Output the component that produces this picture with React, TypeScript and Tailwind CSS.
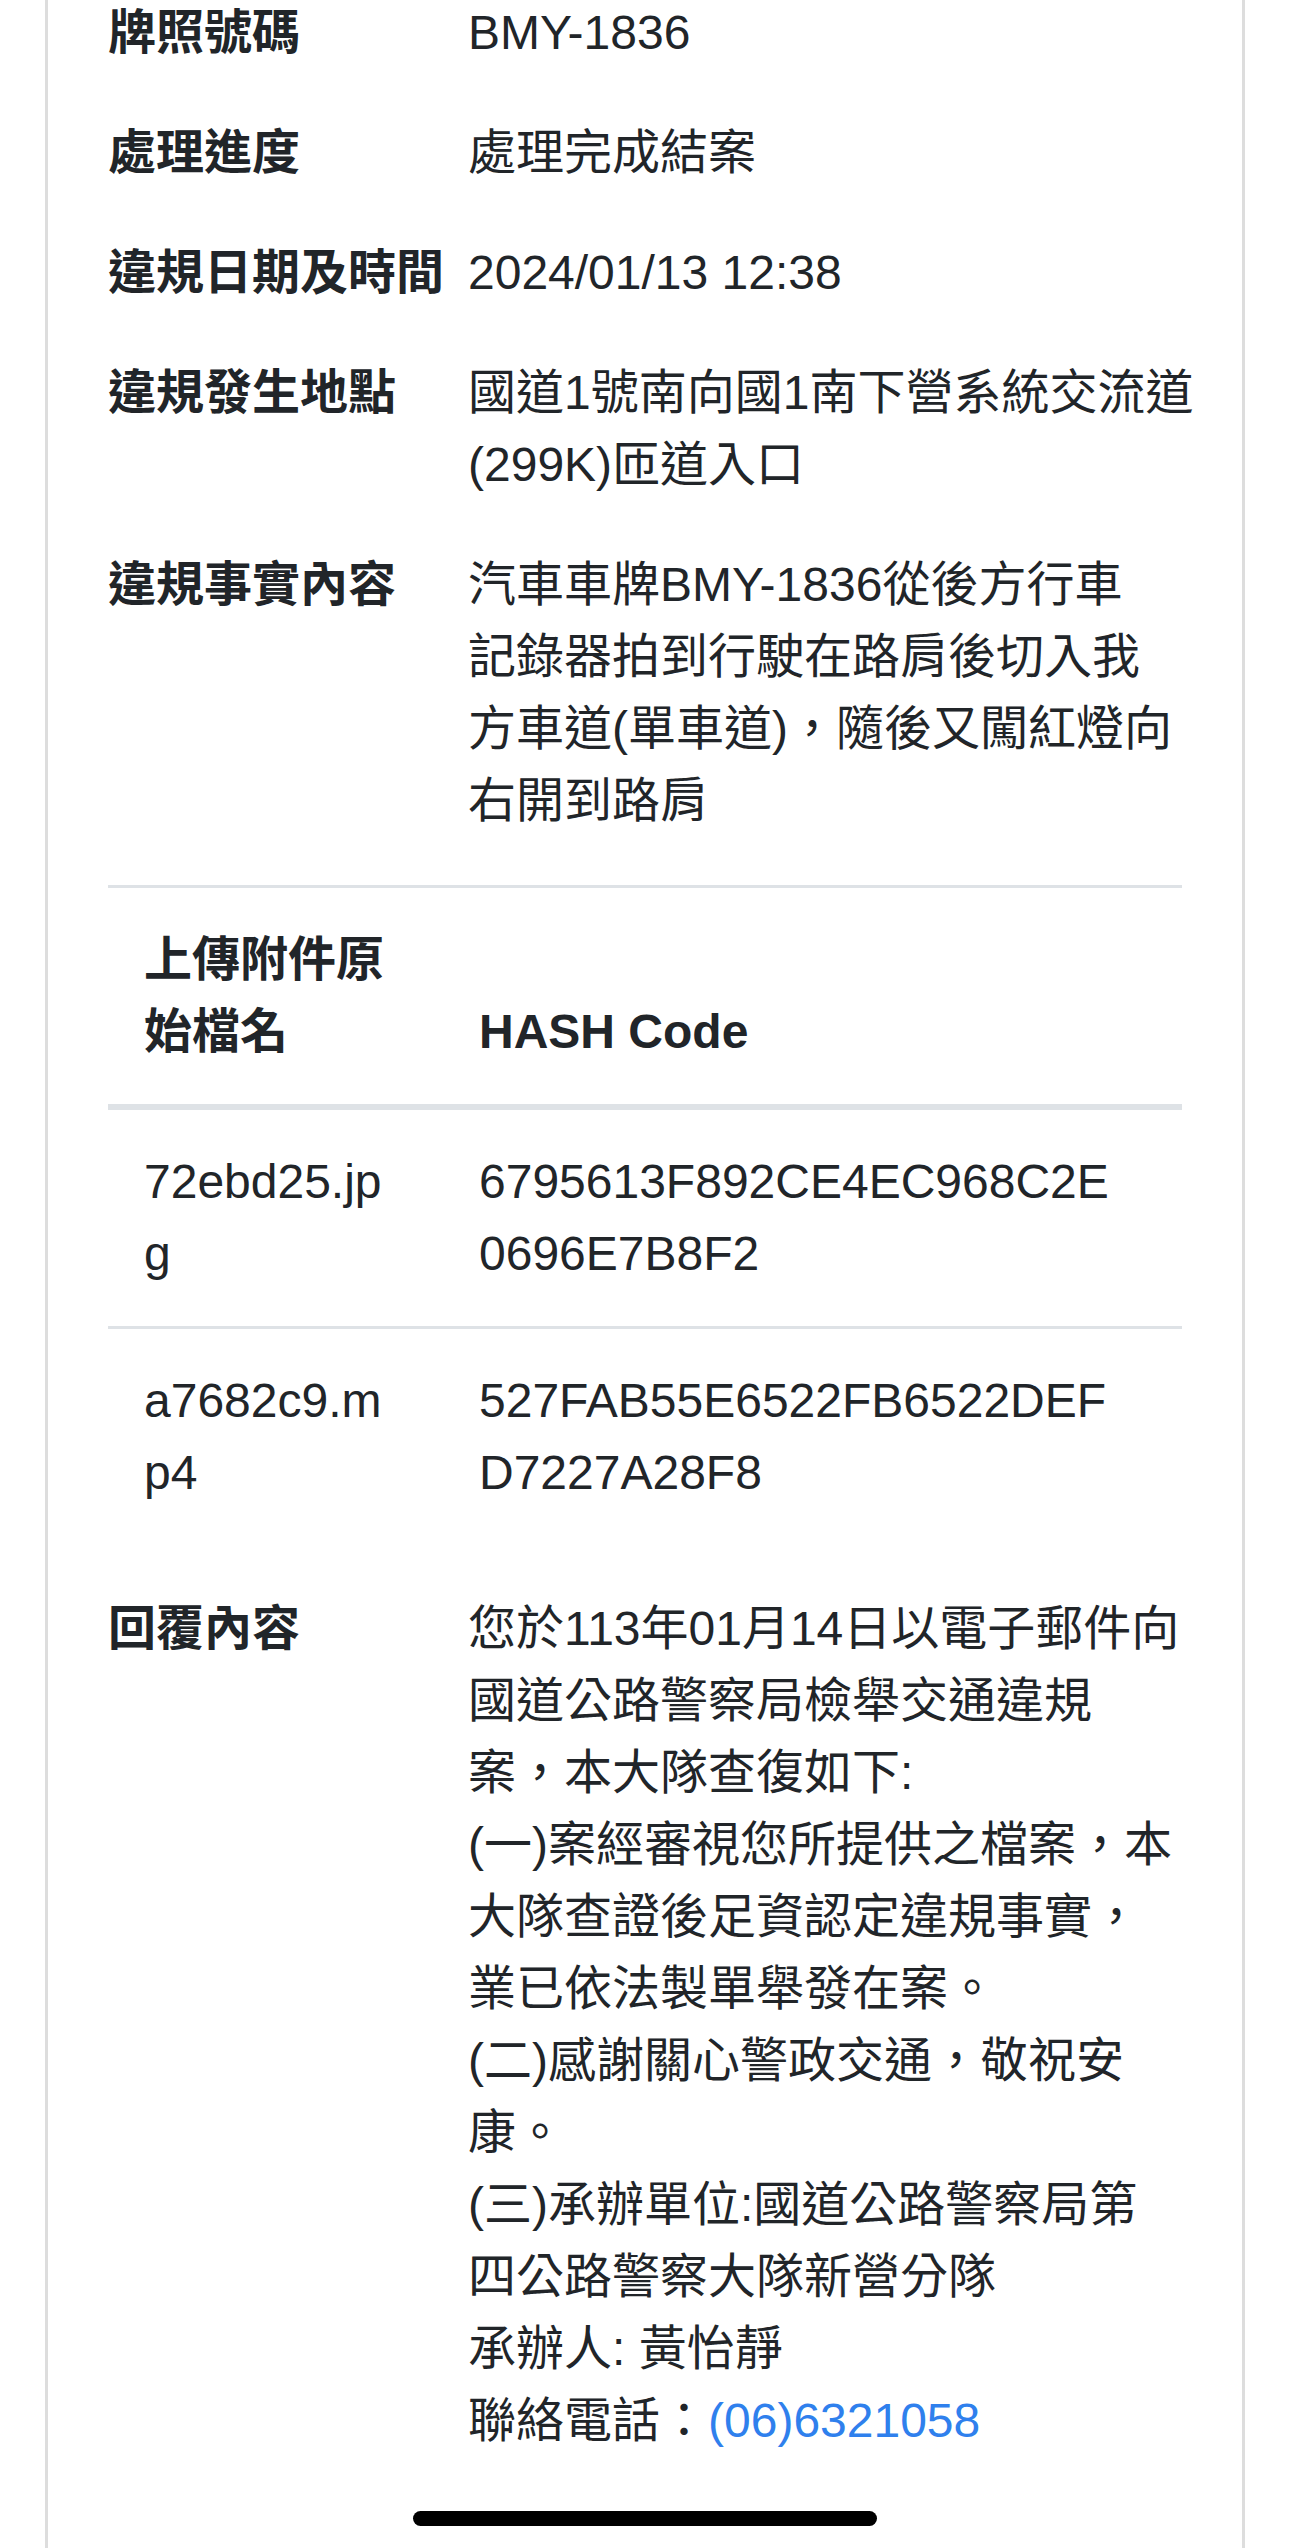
const rows = [
  { label: '牌照號碼', lines: ['BMY-1836'] },
  { label: '處理進度', lines: ['處理完成結案'] },
  { label: '違規日期及時間', lines: ['2024/01/13 12:38'] },
  { label: '違規發生地點', lines: ['國道1號南向國1南下營系統交流道', '(299K)匝道入口'] },
  {
    label: '違規事實內容',
    lines: ['汽車車牌BMY-1836從後方行車', '記錄器拍到行駛在路肩後切入我', '方車道(單車道)，隨後又闖紅燈向', '右開到路肩'],
  },
];

const files = [
  { name: ['72ebd25.jp', 'g'], hash: ['6795613F892CE4EC968C2E', '0696E7B8F2'] },
  { name: ['a7682c9.m', 'p4'], hash: ['527FAB55E6522FB6522DEF', 'D7227A28F8'] },
];

const reply = [
  '您於113年01月14日以電子郵件向',
  '國道公路警察局檢舉交通違規',
  '案，本大隊查復如下:',
  '(一)案經審視您所提供之檔案，本',
  '大隊查證後足資認定違規事實，',
  '業已依法製單舉發在案。',
  '(二)感謝關心警政交通，敬祝安',
  '康。',
  '(三)承辦單位:國道公路警察局第',
  '四公路警察大隊新營分隊',
  '承辦人: 黃怡靜',
];

function Lines({ lines }: { lines: string[] }) {
  return (
    <>
      {lines.map((l, i) => (
        <span key={i} className="block whitespace-nowrap">
          {l}
        </span>
      ))}
    </>
  );
}

export default function App() {
  return (
    <div className="relative min-h-[2548px] overflow-hidden bg-white font-['Liberation_Sans','Noto_Sans_CJK_TC',sans-serif] text-[48px] leading-[72px] text-[#212529]">
      <div className="mx-[45px] min-h-[2548px] border-x-[3px] border-[#dddddd] px-[60px] pb-[92px]">
        <dl className="-mt-[3px]">
          {rows.map((row) => (
            <div key={row.label} className="mb-[48px] flex">
              <dt className="w-[360px] shrink-0 font-bold">{row.label}</dt>
              <dd>
                <Lines lines={row.lines} />
              </dd>
            </div>
          ))}
        </dl>

        <table className="mb-[48px] w-full">
          <thead>
            <tr>
              <th className="w-[335px] border-t-[3px] border-b-[6px] border-[#dee2e6] px-[36px] py-[36px] text-left align-bottom font-bold">
                <Lines lines={['上傳附件原', '始檔名']} />
              </th>
              <th className="border-t-[3px] border-b-[6px] border-[#dee2e6] px-[36px] py-[36px] text-left align-bottom font-bold">
                HASH Code
              </th>
            </tr>
          </thead>
          <tbody>
            {files.map((f) => (
              <tr key={f.name[0]}>
                <td className="border-t-[3px] border-[#dee2e6] px-[36px] py-[36px] align-top">
                  <Lines lines={f.name} />
                </td>
                <td className="border-t-[3px] border-[#dee2e6] px-[36px] py-[36px] align-top">
                  <Lines lines={f.hash} />
                </td>
              </tr>
            ))}
          </tbody>
        </table>

        <div className="flex">
          <div className="w-[360px] shrink-0 font-bold">回覆內容</div>
          <div>
            <Lines lines={reply} />
            <span className="block whitespace-nowrap">
              聯絡電話：<a href="#" className="text-[#2f80ed]">(06)6321058</a>
            </span>
          </div>
        </div>
      </div>

      {/* home indicator */}
      <div className="absolute bottom-[23px] left-1/2 h-[15px] w-[464px] -translate-x-1/2 rounded-full bg-black" />
    </div>
  );
}
